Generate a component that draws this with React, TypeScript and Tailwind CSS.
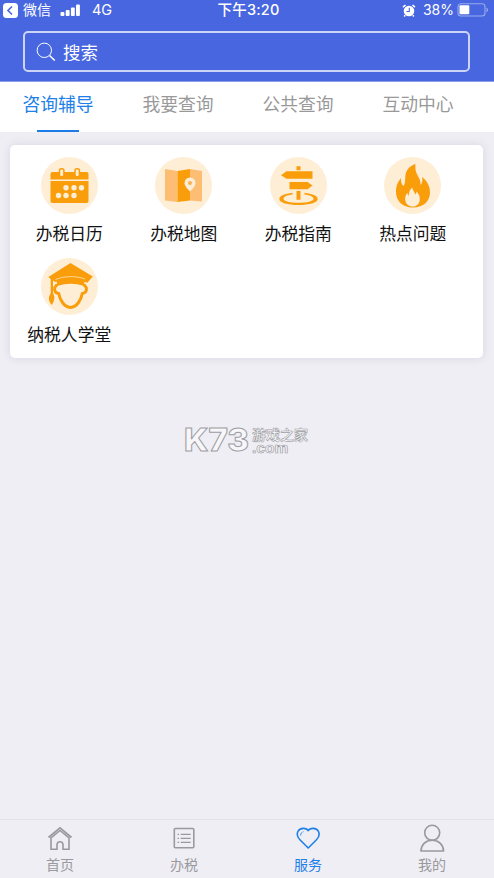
import React, { useState } from 'react';

const ORANGE = '#fa9d0b';
const CREAM = '#feeed6';

const CalendarIcon = () => (
  <svg viewBox="0 0 57 57" className="w-[57px] h-[57px]">
    <circle cx="28.5" cy="28.5" r="28.5" fill={CREAM} />
    <path d="M11.500 15h34a2 2 0 0 1 2 2v5.500h-38V17a2 2 0 0 1 2-2z" fill={ORANGE} />
    <path d="M9.500 24h38v20a2 2 0 0 1-2 2h-34a2 2 0 0 1-2-2z" fill={ORANGE} />
    <rect x="18.500" y="11.700" width="4.400" height="8" rx="1.800" fill={CREAM} stroke={ORANGE} strokeWidth="1.500" />
    <rect x="34" y="11.700" width="4.400" height="8" rx="1.800" fill={CREAM} stroke={ORANGE} strokeWidth="1.500" />
    {[25, 33, 40.5].map(x => <circle key={x} cx={x} cy="30.700" r="2.700" fill={CREAM} />)}
    {[17.5, 25, 33].map(x => <circle key={x} cx={x} cy="38.500" r="2.700" fill={CREAM} />)}
  </svg>
);

const MapIcon = () => (
  <svg viewBox="0 0 57 57" className="w-[57px] h-[57px]">
    <circle cx="28.5" cy="28.5" r="28.5" fill={CREAM} />
    <path d="M10 12l12.500 2v31L10 43.500z" fill="#fdbe73" />
    <path d="M22.500 14L35 12v31.500L22.500 45z" fill={ORANGE} />
    <path d="M35 12l12 2v30.500l-12-1z" fill="#fdbe73" />
    <path d="M35 20.500a5.500 5.500 0 0 1 5.500 5.500c0 3-3 6-5.500 8.500-2.500-2.500-5.500-5.500-5.500-8.500a5.500 5.500 0 0 1 5.500-5.500z" fill={CREAM} />
    <circle cx="35" cy="26" r="2" fill="#fbb04d" />
  </svg>
);

const GuideIcon = () => (
  <svg viewBox="0 0 57 57" className="w-[57px] h-[57px]">
    <circle cx="28.5" cy="28.5" r="28.5" fill={CREAM} />
    <path d="M26.500 9.300h4v4h-4zM11 18.300l5.500-4H42.500v7.500H16.500zM19.500 25h18l5 3.500-5 3.700h-18zM26.500 34h4v8.800h-4z" fill={ORANGE} />
    <path d="M22.500 35.800C15 36.700 9.300 38.800 9.300 42c0 3.700 8.600 6 19.200 6s19.200-2.300 19.200-6c0-3.200-5.700-5.300-13.200-6.200v1.700c5.500.7 9 2.200 9 4.200 0 2.500-6.500 4-15 4s-15-1.500-15-4c0-2 3.500-3.500 9-4.200z" fill={ORANGE} />
  </svg>
);

const FireIcon = () => (
  <svg viewBox="0 0 57 57" className="w-[57px] h-[57px]">
    <circle cx="28.5" cy="28.5" r="28.5" fill={CREAM} />
    <path d="M31.500 7c-.7 6.500 1 9.500 3.500 14 1.200 2.300 1.700 4.500 1.400 7 2-1.700 2.400-5 1.600-8 5 3.500 8 9 8 15.500 0 8.500-6.500 15-17 15-10.500 0-17-6.500-17-15.500 0-6 1.500-9.500 5-14-.3 3.500.3 6 2.500 8 2-3 1.500-5.500 1.800-9.500C21.800 13 25.500 9 31.500 7z" fill={ORANGE} />
    <path d="M28.300 30.500c.4 2.700 2 4.500 3.200 7 .7-1 1-1.800 1-3 2.500 2.500 3.700 5.500 3.200 8.700-.6 4-3.300 6.300-7 6.300s-7.200-2.500-7.500-6.800c-.2-2.700.5-5 2.300-7 0 1.400.3 2.300 1.200 3 .2-3.500 1-6.200 3.600-8.200z" fill={CREAM} />
  </svg>
);

const SchoolIcon = () => (
  <svg viewBox="0 0 57 57" className="w-[57px] h-[57px]">
    <circle cx="28.5" cy="28.5" r="28.5" fill={CREAM} />
    <path d="M29.500 5l22.300 13.500-5.500 6.200-2.800-1c-8-2.800-20.500-3-29.500.3L12 22.500v12l1.300 4.300c.3 3-1 6-2.500 8.200-2-2-3.300-5-2.800-8l1.700-4V21L7.300 19z" fill={ORANGE} />
    <path d="M15.300 22.700c8.500-4.200 20-4.200 28.500 0l-1.300 5c-8-2.700-17.500-2.700-25.700 0z" fill={ORANGE} />
    <path d="M14.500 21.500c8.500-3.500 20-4 29.500-.5" fill="none" stroke={CREAM} strokeWidth="0.700" />
    <path d="M16 26c-.2 2-1.500 2.300-2.300 3.500-.5 3 .3 5.500 4 6C19 42 23 49 29.500 49.500 36 49 40 42 41.300 35.500c3.500-.5 4.600-3 4-6-.8-1.200-2-1.500-2.300-3.500" fill="none" stroke={ORANGE} strokeWidth="3" strokeLinejoin="round" />
  </svg>
);

const HomeIcon = () => (
  <svg viewBox="0 0 26 28" className="w-[26px] h-[28px]" fill="none" stroke="currentColor">
    <path d="M1.500 13.500L13 3.800 24.500 13.500" strokeWidth="1.700" />
    <path d="M4 13.800v11.400h6v-4.500a3 3 0 0 1 6 0v4.500h6V13.800L13 6.500z" strokeWidth="1.600" />
  </svg>
);

const ListIcon = () => (
  <svg viewBox="0 0 26 28" className="w-[26px] h-[28px]" fill="none" stroke="currentColor">
    <rect x="3.300" y="4.500" width="19.500" height="19.300" rx="1" strokeWidth="1.600" />
    <path d="M9.700 10.300h10M9.700 14.300h10M9.700 18.300h10" strokeWidth="1.300" />
    <path d="M6.500 10.300h1.500M6.500 14.300h1.500M6.500 18.300h1.500" strokeWidth="1.300" />
  </svg>
);

const HeartIcon = () => (
  <svg viewBox="0 0 26 28" className="w-[26px] h-[28px]" fill="none" stroke="currentColor">
    <path d="M13.200 6.700C11.500 3.700 5 3.200 2.900 7.500c-1.400 3.200-.4 5.900 2 8.300l8.300 8.200 8.300-8.200c2.400-2.400 3.400-5.100 2-8.300C21.400 3.200 14.900 3.700 13.200 6.700z" strokeWidth="1.600" strokeLinejoin="round" />
    <path d="M5.700 11.500c0-2.300 1-3.500 3.200-3.800" strokeWidth="1" strokeDasharray="4 1" />
  </svg>
);

const UserIcon = () => (
  <svg viewBox="0 0 26 28" className="w-[26px] h-[28px]" fill="none" stroke="currentColor" strokeWidth="1.600">
    <circle cx="13.200" cy="8.800" r="7.500" />
    <path d="M2 27c0-6 4.500-10.700 11.200-10.700s11.300 4.700 11.300 10.700z" />
  </svg>
);

const tabs = ['咨询辅导', '我要查询', '公共查询', '互动中心'];

const services = [
  { label: '办税日历', icon: <CalendarIcon /> },
  { label: '办税地图', icon: <MapIcon /> },
  { label: '办税指南', icon: <GuideIcon /> },
  { label: '热点问题', icon: <FireIcon /> },
  { label: '纳税人学堂', icon: <SchoolIcon /> },
];

const navItems = [
  { label: '首页', icon: <HomeIcon /> },
  { label: '办税', icon: <ListIcon /> },
  { label: '服务', icon: <HeartIcon /> },
  { label: '我的', icon: <UserIcon /> },
];

const StatusBar = () => (
  <div className="grid grid-cols-[1fr_auto_1fr] items-center h-5 text-[15px] leading-5">
    <div className="flex items-center pl-[3px]">
      <svg viewBox="0 0 15 15" className="w-[15px] h-[15px]">
        <rect width="15" height="15" rx="3.500" fill="#fff" />
        <path d="M9 3.500l-4 4 4 4" fill="none" stroke="#4766e0" strokeWidth="1.600" />
      </svg>
      <span className="ml-[5px] text-[14px]">微信</span>
      <svg viewBox="0 0 20 12" className="ml-[9px] w-5 h-3" fill="currentColor">
        <rect x="0.500" y="8" width="3.900" height="4" rx="1" />
        <rect x="5.700" y="6" width="3.900" height="6" rx="1" />
        <rect x="10.900" y="3.500" width="3.900" height="8.500" rx="1" />
        <rect x="16" y="0.500" width="3.900" height="11.500" rx="1" />
      </svg>
      <span className="ml-[12px] text-[14.5px]">4G</span>
    </div>
    <div className="ml-[3px] text-[14.5px] font-medium tracking-[0.2px]">下午3:20</div>
    <div className="flex items-center justify-end pr-[5px]">
      <svg viewBox="0 0 14 13" className="w-[14px] h-[13px]">
        <circle cx="7" cy="7" r="5.300" fill="#fff" />
        <path d="M1 3.200L3.500 1M13 3.200L10.500 1M3.200 11.200l-1 1.300M10.800 11.200l1 1.300" stroke="#fff" strokeWidth="1.600" />
        <path d="M7.300 3.800v3.700H4.500" fill="none" stroke="#4766e0" strokeWidth="1.100" />
      </svg>
      <span className="ml-[7px] text-[14px]">38%</span>
      <svg viewBox="0 0 32 14" className="ml-[3px] w-8 h-[14px]">
        <rect x="1" y="0.700" width="27" height="12.300" rx="3" fill="none" stroke="#9aabee" strokeWidth="1.100" />
        <rect x="2.500" y="2.300" width="9.800" height="9" rx="1" fill="#fff" />
        <path d="M29.500 4.500c2 .8 2 4 0 4.800z" fill="#9aabee" />
      </svg>
    </div>
  </div>
);

const Watermark = () => (
  <div className="flex items-center h-11 text-[#f7f7fa]">
    <svg viewBox="0 0 67 44" className="w-[67px] h-11" fill="currentColor" stroke="#9d9da3" strokeWidth="1">
      <text x="0" y="32.500" fontSize="31" fontWeight="800" textLength="65" lengthAdjust="spacingAndGlyphs" fontFamily="Inter, sans-serif">K73</text>
    </svg>
    <div className="flex flex-col pl-px font-bold">
      <span className="text-[14px] leading-[14px] [-webkit-text-stroke:0.6px_#9d9da3]">游戏之家</span>
      <span className="text-[15.5px] leading-[11px] font-['Liberation_Sans',sans-serif] [-webkit-text-stroke:0.7px_#9d9da3]">.com</span>
    </div>
  </div>
);

const App: React.FC = () => {
  const [activeTab, setActiveTab] = useState(0);
  const [activeNav, setActiveNav] = useState(2);

  return (
    <div className="flex flex-col w-full h-screen overflow-hidden bg-[#efeef4] font-[Inter,'Noto_Sans_CJK_SC',sans-serif]">
      {/* Header */}
      <header className="h-[82px] shrink-0 bg-[#4766e0] text-white border-b border-[#8d9fe9]">
        <StatusBar />
        <div className="mt-[11px] ml-[23px] mr-6 h-[41px] flex items-center rounded-[5px] border-2 border-[#cbd4f7] pl-[11px]">
          <svg viewBox="0 0 20 20" className="w-5 h-5" fill="none" stroke="currentColor">
            <circle cx="8.300" cy="8.300" r="7.200" strokeWidth="1" />
            <path d="M13.500 13.500l5.300 5" strokeWidth="1.700" />
          </svg>
          <span className="ml-[7px] pt-[3px] text-[17.5px]">搜索</span>
        </div>
      </header>

      {/* Tabs */}
      <nav className="h-[50px] shrink-0 flex gap-12 pl-[22px] bg-white">
        {tabs.map((tab, i) => (
          <button
            key={tab}
            onClick={() => setActiveTab(i)}
            className={`w-[72px] flex flex-col items-center justify-between whitespace-nowrap text-[17.8px] leading-[46px] ${activeTab === i ? 'text-[#2080e8]' : 'text-[#999]'}`}
          >
            {tab}
            {activeTab === i && <span className="w-[42px] h-[2px] bg-[#1d7de6]"></span>}
          </button>
        ))}
      </nav>

      {/* Services */}
      <main className="flex-1 pt-[13px]">
        <div className="ml-[10px] mr-[11px] h-[213px] rounded-[5px] bg-white pt-[12px] pl-[2px] pr-[13px] shadow-[0_0_10px_rgba(60,60,110,0.13)]">
          <div className="grid grid-cols-4 auto-rows-[101px]">
            {services.map(item => (
              <div key={item.label} className="flex flex-col items-center">
                {item.icon}
                <span className="mt-[8px] text-[16.8px] leading-6 whitespace-nowrap text-[#111]">{item.label}</span>
              </div>
            ))}
          </div>
        </div>
        <div className="mt-[60px] ml-[184px]">
          <Watermark />
        </div>
      </main>

      {/* Bottom navigation */}
      <footer className="h-[59px] shrink-0 flex gap-[42px] pl-[19px] pt-[4px] border-t border-[#e3e2e8]">
        {navItems.map((item, i) => (
          <button
            key={item.label}
            onClick={() => setActiveNav(i)}
            className={`w-[82px] flex flex-col items-center text-[14px] leading-[26px] ${activeNav === i ? 'text-[#2080e8]' : 'text-[#99999e]'}`}
          >
            {item.icon}
            <span>{item.label}</span>
          </button>
        ))}
      </footer>
    </div>
  );
};

export default App;
